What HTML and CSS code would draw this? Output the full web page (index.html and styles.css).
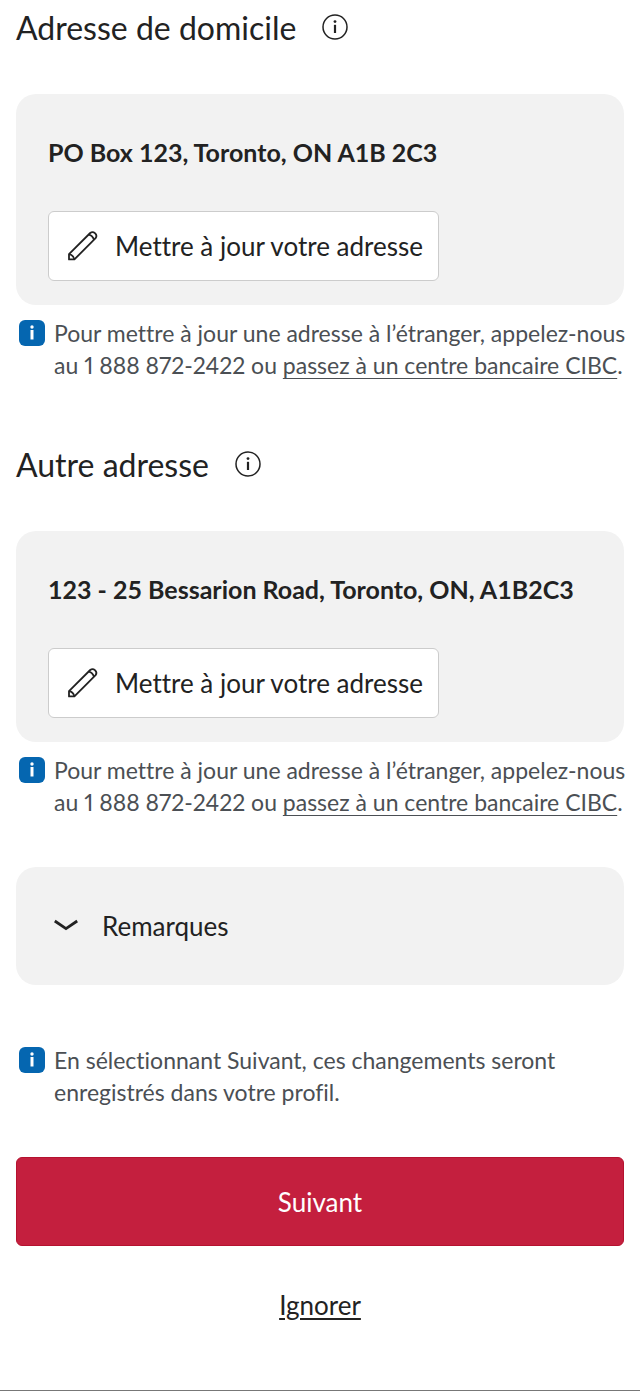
FILE: index.html
```html
<!DOCTYPE html>
<html lang="fr">
<head>
    <meta charset="UTF-8">
    <meta name="viewport" content="width=device-width, initial-scale=1.0">
    <title>Adresse de domicile</title>
    <link rel="stylesheet" href="styles.css">
</head>
<body>
    <main class="page">
        <section class="address">
            <div class="address-title">
                <h2>Adresse de domicile</h2>
                <button type="button" class="info-btn" aria-label="Information">
                    <svg width="28" height="28" viewBox="0 0 28 28" fill="none">
                        <circle cx="14" cy="14" r="12" stroke="#222" stroke-width="1.5"/>
                        <circle cx="14" cy="8.6" r="1.4" fill="#222"/>
                        <path d="M14 11.8V20" stroke="#222" stroke-width="2.2"/>
                    </svg>
                </button>
            </div>
            <div class="card">
                <p class="address-text">PO Box 123, Toronto, ON A1B 2C3</p>
                <button type="button" class="edit-btn">
                    <svg width="32" height="32" viewBox="0 0 32 32" fill="none" stroke="#222" stroke-width="1.8" stroke-linejoin="round">
                        <path d="M2 29.4V24.2L23.2 3Q25.6 1.2 28.2 3.4Q30.4 5.8 28.6 8.2L7.4 29.4Z"/>
                        <path d="M2 24.2Q6.2 24.8 7.4 29.4M21.6 4.6Q25.8 5.6 27 9.8"/>
                    </svg>
                    Mettre à jour votre adresse
                </button>
            </div>
            <div class="note">
                <svg class="note-icon" width="26" height="26" viewBox="0 0 26 26">
                    <rect width="26" height="26" rx="6" fill="#0566b0"/>
                    <circle cx="13" cy="7" r="1.7" fill="#fff"/>
                    <path d="M13 10V19.5" stroke="#fff" stroke-width="3"/>
                </svg>
                <p>Pour mettre à jour une adresse à l’étranger, appelez-nous au 1 888 872-2422 ou <a href="#">passez à un centre bancaire CIBC</a>.</p>
            </div>
        </section>

        <section class="address">
            <div class="address-title">
                <h2>Autre adresse</h2>
                <button type="button" class="info-btn" aria-label="Information">
                    <svg width="28" height="28" viewBox="0 0 28 28" fill="none">
                        <circle cx="14" cy="14" r="12" stroke="#222" stroke-width="1.5"/>
                        <circle cx="14" cy="8.6" r="1.4" fill="#222"/>
                        <path d="M14 11.8V20" stroke="#222" stroke-width="2.2"/>
                    </svg>
                </button>
            </div>
            <div class="card">
                <p class="address-text">123 - 25 Bessarion Road, Toronto, ON, A1B2C3</p>
                <button type="button" class="edit-btn">
                    <svg width="32" height="32" viewBox="0 0 32 32" fill="none" stroke="#222" stroke-width="1.8" stroke-linejoin="round">
                        <path d="M2 29.4V24.2L23.2 3Q25.6 1.2 28.2 3.4Q30.4 5.8 28.6 8.2L7.4 29.4Z"/>
                        <path d="M2 24.2Q6.2 24.8 7.4 29.4M21.6 4.6Q25.8 5.6 27 9.8"/>
                    </svg>
                    Mettre à jour votre adresse
                </button>
            </div>
            <div class="note">
                <svg class="note-icon" width="26" height="26" viewBox="0 0 26 26">
                    <rect width="26" height="26" rx="6" fill="#0566b0"/>
                    <circle cx="13" cy="7" r="1.7" fill="#fff"/>
                    <path d="M13 10V19.5" stroke="#fff" stroke-width="3"/>
                </svg>
                <p>Pour mettre à jour une adresse à l’étranger, appelez-nous au 1 888 872-2422 ou <a href="#">passez à un centre bancaire CIBC</a>.</p>
            </div>
        </section>

        <button type="button" class="remarks" aria-expanded="false">
            <svg width="24" height="14" viewBox="0 0 24 14" fill="none">
                <path d="M0.8 2L12 9.6L23.2 2" stroke="#222" stroke-width="2.8"/>
            </svg>
            Remarques
        </button>

        <div class="note">
            <svg class="note-icon" width="26" height="26" viewBox="0 0 26 26">
                <rect width="26" height="26" rx="6" fill="#0566b0"/>
                <circle cx="13" cy="7" r="1.7" fill="#fff"/>
                <path d="M13 10V19.5" stroke="#fff" stroke-width="3"/>
            </svg>
            <p>En sélectionnant Suivant, ces changements seront enregistrés dans votre profil.</p>
        </div>

        <button type="submit" class="next-btn">Suivant</button>
        <a href="#" class="skip">Ignorer</a>
    </main>
</body>
</html>
```
FILE: styles.css
```css
* {
    box-sizing: border-box;
}
body {
    margin: 0;
    font-family: Lato, "Noto Sans", sans-serif;
    font-variant-ligatures: none;
    color: #222;
    background-color: #fff;
}
h2, p {
    margin: 0;
}
button {
    font-family: inherit;
    font-variant-ligatures: inherit;
    color: inherit;
    cursor: pointer;
}
svg {
    display: block;
    flex-shrink: 0;
}
.page {
    display: flex;
    flex-direction: column;
    min-height: 100vh;
    padding: 8px 16px 0;
    border-bottom: 1px solid #777;
}
.address {
    margin-bottom: 64px;
}
.address + .remarks {
    margin-top: -15px;
}
.address-title {
    display: flex;
    align-items: center;
    gap: 25px;
    margin-bottom: 46px;
}
.address-title h2 {
    font-size: 32px;
    line-height: 40px;
    font-weight: 400;
}
.info-btn {
    padding: 0 0 2px;
    border: none;
    background: none;
}
.card {
    padding: 42px 32px 24px;
    border-radius: 20px;
    background-color: #f2f2f2;
}
.address-text {
    margin-bottom: 43px;
    font-size: 25px;
    line-height: 32px;
    font-weight: 700;
}
.edit-btn {
    display: flex;
    align-items: center;
    gap: 16px;
    height: 70px;
    padding: 0 15px 0 18px;
    border: 1px solid #ccc;
    border-radius: 6px;
    background-color: #fff;
    font-size: 26px;
}
.note {
    display: flex;
    gap: 9px;
    margin: 12px -12px 0 0;
    padding-left: 3px;
    font-size: 23px;
    line-height: 32px;
    font-variant-numeric: proportional-nums;
    color: #4b4f54;
}
.note-icon {
    margin-top: 3px;
}
.note a {
    color: inherit;
    text-decoration-thickness: 1px;
    text-underline-offset: 4px;
}
.remarks {
    display: flex;
    align-items: center;
    gap: 24px;
    height: 118px;
    margin-bottom: 47px;
    padding: 0 38px;
    border: none;
    border-radius: 20px;
    background-color: #f2f2f2;
    font-size: 26px;
}
.next-btn {
    height: 89px;
    margin-top: 49px;
    border: 1px solid #b5122f;
    border-radius: 6px;
    background-color: #c41f3e;
    color: #fff;
    font-size: 26px;
}
.skip {
    align-self: center;
    margin: 43px 0;
    font-size: 26px;
    line-height: 32px;
    color: inherit;
    text-underline-offset: 3px;
}
```
